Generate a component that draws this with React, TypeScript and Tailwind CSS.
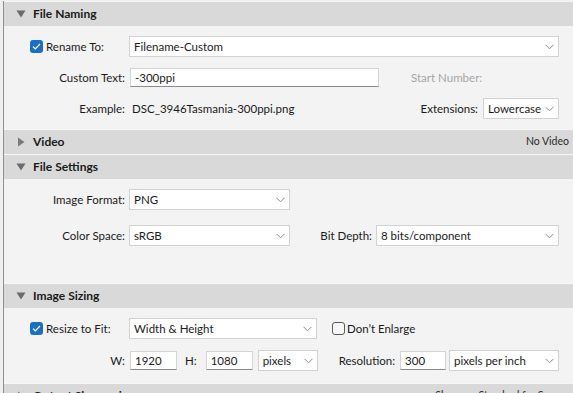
import React from "react";

const ui = "font-['Lato','Noto_Sans',sans-serif]";

function Triangle({ open }: { open: boolean }) {
  return open ? (
    <svg width="10" height="8" viewBox="0 0 10 8" className="shrink-0">
      <path d="M0.5 0.5 H9.5 L5 7.5 Z" fill="#6b6b6b" />
    </svg>
  ) : (
    <svg width="10" height="10" viewBox="0 0 10 10" className="shrink-0">
      <path d="M2 0.5 V9.5 L8.5 5 Z" fill="#7a7a7a" />
    </svg>
  );
}

function Chevron() {
  return (
    <svg width="9" height="6" viewBox="0 0 9 6" className="shrink-0">
      <path d="M0.5 0.8 L4.5 4.8 L8.5 0.8" fill="none" stroke="#8c8c8c" strokeWidth="1" />
    </svg>
  );
}

function Header({
  title,
  open,
  right,
}: {
  title: string;
  open: boolean;
  right?: string;
}) {
  return (
    <div className="flex h-[25px] shrink-0 items-center border-t border-[#f7f7f7] bg-[#d9d9d9] pl-[11px] pr-[4px]">
      <div className="flex w-[11px] justify-center">
        <Triangle open={open} />
      </div>
      <span className="ml-[7px] text-[12px] font-bold text-[#1a1a1a]">{title}</span>
      {right && <span className="ml-auto text-[10.5px] text-[#2a2a2a]">{right}</span>}
    </div>
  );
}

function Select({ value, w }: { value: string; w: string }) {
  return (
    <div
      className={`flex h-[21px] shrink-0 items-center justify-between border border-[#d2d2d2] bg-white pl-[4px] pr-[4px] text-[11.5px] text-[#1a1a1a] ${w}`}
    >
      <span className="whitespace-nowrap">{value}</span>
      <Chevron />
    </div>
  );
}

function Input({ value, w }: { value: string; w: string }) {
  return (
    <div
      className={`flex h-[19px] shrink-0 items-center border border-[#d4d4d4] border-b-[#8a8a8a] bg-white pl-[4px] text-[11.5px] text-[#1a1a1a] ${w}`}
    >
      {value}
    </div>
  );
}

function Check({ on }: { on: boolean }) {
  return on ? (
    <div className="flex h-[13px] w-[13px] shrink-0 items-center justify-center rounded-[3px] bg-[#1a6fc4]">
      <svg width="9" height="7" viewBox="0 0 9 7">
        <path d="M1 3.6 L3.3 5.8 L8 1" fill="none" stroke="white" strokeWidth="1.2" />
      </svg>
    </div>
  ) : (
    <div className="h-[13px] w-[13px] shrink-0 rounded-[3px] border border-[#5a5a5a] bg-[#f7f7f7]" />
  );
}

function Label({ children }: { children: React.ReactNode }) {
  return (
    <div className="flex w-[121px] shrink-0 justify-end whitespace-nowrap text-[11.5px] text-[#1a1a1a]">
      {children}
    </div>
  );
}

export default function App() {
  return (
    <div className={`h-[393px] w-[573px] overflow-hidden bg-[#efefef] pl-[3px] pt-[1px] ${ui}`}>
      <div className="flex h-full flex-col border-l border-[#8f8f8f] bg-[#f3f3f3]">
        <Header title="File Naming" open />
        <div className="flex h-[103px] shrink-0 flex-col gap-[10px] pr-[14px] pt-[10px]">
          <div className="flex items-center">
            <div className="flex w-[121px] shrink-0 items-center gap-[3px] pl-[26px] text-[11.5px] text-[#1a1a1a]">
              <Check on />
              <span>Rename To:</span>
            </div>
            <div className="ml-[4px] flex-1">
              <Select value="Filename-Custom" w="w-full" />
            </div>
          </div>
          <div className="flex h-[21px] items-center">
            <Label>Custom Text:</Label>
            <div className="ml-[5px]">
              <Input value="-300ppi" w="w-[249px]" />
            </div>
            <span className="ml-[32px] text-[11.5px] text-[#a6a6a6]">Start Number:</span>
          </div>
          <div className="flex items-center">
            <Label>Example:</Label>
            <span className="ml-[7px] text-[11.5px] text-[#1a1a1a]">DSC_3946Tasmania-300ppi.png</span>
            <span className="ml-auto mr-[5px] text-[11.5px] text-[#1a1a1a]">Extensions:</span>
            <Select value="Lowercase" w="w-[76px]" />
          </div>
        </div>

        <Header title="Video" open={false} right="No Video" />
        <Header title="File Settings" open />
        <div className="flex h-[104px] shrink-0 flex-col gap-[15px] pr-[14px] pt-[10px]">
          <div className="flex items-center">
            <Label>Image Format:</Label>
            <div className="ml-[4px]">
              <Select value="PNG" w="w-[161px]" />
            </div>
          </div>
          <div className="flex items-center">
            <Label>Color Space:</Label>
            <div className="ml-[4px]">
              <Select value="sRGB" w="w-[161px]" />
            </div>
            <span className="ml-auto mr-[4px] text-[11.5px] text-[#1a1a1a]">Bit Depth:</span>
            <Select value="8 bits/component" w="w-[183px]" />
          </div>
        </div>

        <Header title="Image Sizing" open />
        <div className="flex h-[75px] shrink-0 flex-col gap-[11px] pr-[14px] pt-[10px]">
          <div className="flex items-center">
            <div className="flex w-[121px] shrink-0 items-center gap-[3px] pl-[26px] text-[11.5px] text-[#1a1a1a]">
              <Check on />
              <span>Resize to Fit:</span>
            </div>
            <div className="ml-[4px]">
              <Select value="Width & Height" w="w-[188px]" />
            </div>
            <div className="ml-[15px] flex items-center gap-[2px] text-[11.5px] text-[#1a1a1a]">
              <Check on={false} />
              <span>Don’t Enlarge</span>
            </div>
          </div>
          <div className="flex items-center text-[11.5px] text-[#1a1a1a]">
            <Label>W:</Label>
            <div className="ml-[5px]">
              <Input value="1920" w="w-[47px]" />
            </div>
            <span className="ml-[8px]">H:</span>
            <div className="ml-[9px]">
              <Input value="1080" w="w-[47px]" />
            </div>
            <div className="ml-[5px]">
              <Select value="pixels" w="w-[60px]" />
            </div>
            <span className="ml-[21px]">Resolution:</span>
            <div className="ml-[5px]">
              <Input value="300" w="w-[46px]" />
            </div>
            <div className="ml-auto">
              <Select value="pixels per inch" w="w-[110px]" />
            </div>
          </div>
        </div>

        <Header title="Output Sharpening" open={false} right="Sharpen: Standard for Screen" />
      </div>
    </div>
  );
}
